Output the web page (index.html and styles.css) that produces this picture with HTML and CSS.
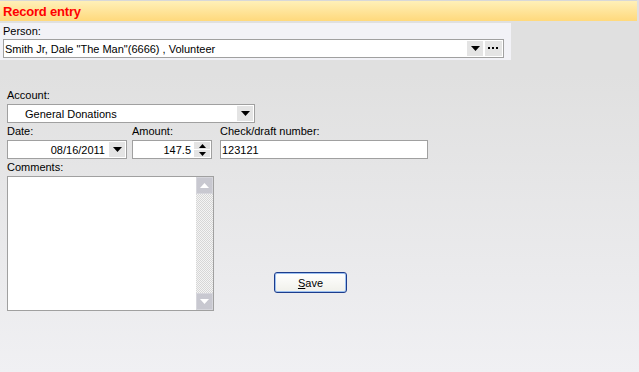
FILE: index.html
```html
<!DOCTYPE html>
<html lang="en">

<head>
    <meta charset="UTF-8">
    <meta name="viewport" content="width=device-width, initial-scale=1.0">
    <title>Record entry</title>
    <link rel="stylesheet" href="styles.css">
</head>

<body>
    <div class="header">
        <div class="header-title">Record entry</div>
    </div>
    <div class="person-panel">
        <div class="label">Person:</div>
        <div class="field person-field">
            <span class="field-text">Smith Jr, Dale "The Man"(6666) , Volunteer</span>
            <span class="btn drop"><svg width="9" height="5" viewBox="0 0 9 5"><path d="M0 0h9L4.5 5z" fill="#000"/></svg></span>
            <span class="btn dots"><svg width="11" height="3" viewBox="0 0 11 3"><rect x="0" y="0" width="2" height="2"/><rect x="4" y="0" width="2" height="2"/><rect x="8" y="0" width="2" height="2"/></svg></span>
        </div>
    </div>

    <div class="form">
        <div class="label">Account:</div>
        <div class="field account-field">
            <span class="field-text indent">General Donations</span>
            <span class="btn drop"><svg width="9" height="5" viewBox="0 0 9 5"><path d="M0 0h9L4.5 5z" fill="#000"/></svg></span>
        </div>

        <div class="row">
            <div class="col date-col">
                <div class="label">Date:</div>
                <div class="field">
                    <span class="field-text right">08/16/2011</span>
                    <span class="btn drop"><svg width="9" height="5" viewBox="0 0 9 5"><path d="M0 0h9L4.5 5z" fill="#000"/></svg></span>
                </div>
            </div>
            <div class="col amount-col">
                <div class="label">Amount:</div>
                <div class="field">
                    <span class="field-text right">147.5</span>
                    <span class="spin">
                        <span class="spin-half"><svg width="7" height="4" viewBox="0 0 7 4"><path d="M0 4h7L3.5 0z" fill="#000"/></svg></span>
                        <span class="spin-half"><svg width="7" height="4" viewBox="0 0 7 4"><path d="M0 0h7L3.5 4z" fill="#000"/></svg></span>
                    </span>
                </div>
            </div>
            <div class="col check-col">
                <div class="label">Check/draft number:</div>
                <div class="field">
                    <span class="field-text">123121</span>
                </div>
            </div>
        </div>

        <div class="row">
            <div class="col memo-col">
                <div class="label">Comments:</div>
                <div class="memo">
                    <div class="memo-area"></div>
                    <div class="scrollbar">
                        <span class="sb-btn"><svg width="9" height="5" viewBox="0 0 9 5"><path d="M0 5h9L4.5 0z" fill="#fff"/></svg></span>
                        <span class="sb-track"></span>
                        <span class="sb-btn"><svg width="9" height="5" viewBox="0 0 9 5"><path d="M0 0h9L4.5 5z" fill="#fff"/></svg></span>
                    </div>
                </div>
            </div>
            <div class="save-wrap">
                <button class="save-btn"><u>S</u>ave</button>
            </div>
        </div>
    </div>
</body>

</html>
```

FILE: styles.css
```css
* {
    box-sizing: border-box;
}

html {
    height: 100%;
}

body {
    margin: 0;
    min-height: 100%;
    font-family: "Liberation Sans", Arial, sans-serif;
    font-size: 11px;
    color: #000;
    background: linear-gradient(to bottom, #e0e0e0 20%, #f0f0f3 100%);
}

.header {
    height: 21px;
    border-top: 1px solid #d8d8d8;
    margin-right: 2px;
    background: linear-gradient(to bottom, #fff0b8, #ffd97c);
    display: flex;
    align-items: center;
}

.header-title {
    padding-left: 3px;
    font-weight: bold;
    font-size: 13px;
    color: #ff0000;
    letter-spacing: -0.2px;
}

.person-panel {
    margin-top: 2px;
    width: 511px;
    height: 37px;
    padding: 2px 7px 0 3px;
    background: #f2f2f7;
}

.label {
    height: 13px;
    line-height: 13px;
    white-space: nowrap;
}

.field {
    height: 19px;
    margin-top: 2px;
    border: 1px solid #a0a0a0;
    background: #fff;
    display: flex;
    align-items: center;
    padding-right: 1px;
}

.person-panel .field {
    margin-top: 1px;
}

.field-text {
    flex: 1;
    padding-left: 1px;
    white-space: nowrap;
    overflow: hidden;
}

.field-text.indent {
    padding-left: 17px;
}

.field-text.right {
    text-align: right;
    padding-right: 4px;
}

.btn {
    width: 16px;
    height: 15px;
    background: #e4e4e4;
    display: flex;
    align-items: center;
    justify-content: center;
}

.btn.dots {
    margin-left: 2px;
    width: 17px;
}

.form {
    padding: 29px 0 0 7px;
}

.account-field {
    width: 248px;
}

.row {
    display: flex;
    margin-top: 2px;
}

.date-col {
    width: 120px;
    margin-right: 5px;
}

.amount-col {
    width: 80px;
    margin-right: 8px;
}

.amount-col .field-text.right {
    padding-right: 3px;
}

.check-col {
    width: 208px;
}

.spin {
    width: 16px;
    height: 15px;
    display: flex;
    flex-direction: column;
    gap: 1px;
}

.spin-half {
    flex: 1;
    background: #e4e4e4;
    display: flex;
    align-items: center;
    justify-content: center;
}

.memo-col {
    width: 207px;
}

.memo {
    margin-top: 2px;
    height: 135px;
    border: 1px solid #a0a0a0;
    background: #fff;
    display: flex;
}

.memo-area {
    flex: 1;
}

.scrollbar {
    width: 17px;
    display: flex;
    flex-direction: column;
    background-color: #eeeeee;
    background-image: repeating-conic-gradient(#d6d6d6 0 25%, #f4f4f4 0 50%);
    background-size: 2px 2px;
}

.sb-btn {
    height: 17px;
    background: #c8c8d0;
    border: 1px solid #d6d6dc;
    display: flex;
    align-items: center;
    justify-content: center;
}

.sb-track {
    flex: 1;
}

.save-wrap {
    padding-top: 111px;
    padding-left: 60px;
}

.save-btn {
    width: 73px;
    height: 21px;
    font-family: "Liberation Sans", Arial, sans-serif;
    font-size: 11px;
    color: #000;
    border: 1px solid #1c3c8c;
    border-radius: 3px;
    background: linear-gradient(to bottom, #ffffff, #f0f0ea);
    box-shadow: inset 0 0 0 1px #9cc0f0;
    padding: 0;
}
```
